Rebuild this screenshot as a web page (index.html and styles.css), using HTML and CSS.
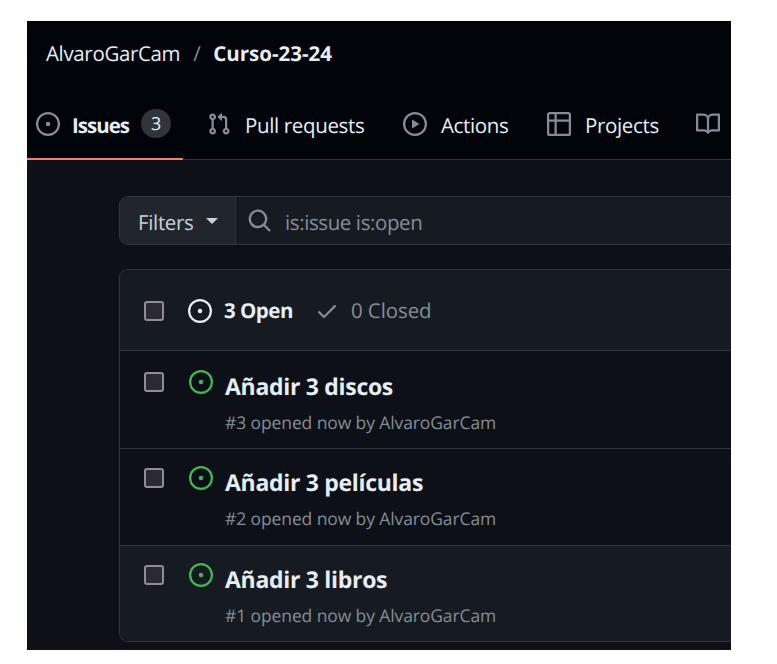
FILE: index.html
```html
<!DOCTYPE html>
<html lang="es">
<head>
<meta charset="utf-8">
<title>Issues · Curso-23-24</title>
<link rel="stylesheet" href="styles.css">
</head>
<body>
<svg class="defs" aria-hidden="true">
  <symbol id="issue" viewBox="0 0 16 16"><path d="M8 9.5a1.5 1.5 0 1 0 0-3 1.5 1.5 0 0 0 0 3Z"/><path d="M8 0a8 8 0 1 1 0 16A8 8 0 0 1 8 0ZM1.5 8a6.5 6.5 0 1 0 13 0 6.5 6.5 0 0 0-13 0Z"/></symbol>
</svg>
<main class="app">
  <header class="header">
    <div class="crumbs"><span class="owner">AlvaroGarCam</span><span class="slash">/</span><strong class="repo">Curso-23-24</strong></div>
    <nav class="tabs">
      <a class="tab active"><svg class="icon"><use href="#issue"/></svg><span class="label">Issues</span><span class="badge">3</span></a>
      <a class="tab"><svg class="icon" viewBox="0 0 16 16"><path d="M1.5 3.25a2.25 2.25 0 1 1 3 2.122v5.256a2.251 2.251 0 1 1-1.5 0V5.372A2.25 2.25 0 0 1 1.5 3.25Zm5.677-.177L9.573.677A.25.25 0 0 1 10 .854V2.5h1A2.5 2.5 0 0 1 13.5 5v5.628a2.251 2.251 0 1 1-1.5 0V5a1 1 0 0 0-1-1h-1v1.646a.25.25 0 0 1-.427.177L7.177 3.427a.25.25 0 0 1 0-.354ZM3.75 2.5a.75.75 0 1 0 0 1.5.75.75 0 0 0 0-1.5Zm0 9.5a.75.75 0 1 0 0 1.5.75.75 0 0 0 0-1.5Zm8.25.75a.75.75 0 1 0 1.5 0 .75.75 0 0 0-1.5 0Z"/></svg><span class="label">Pull requests</span></a>
      <a class="tab"><svg class="icon" viewBox="0 0 16 16"><path d="M8 0a8 8 0 1 1 0 16A8 8 0 0 1 8 0ZM1.5 8a6.5 6.5 0 1 0 13 0 6.5 6.5 0 0 0-13 0Zm4.879-2.773 4.264 2.559a.25.25 0 0 1 0 .428l-4.264 2.559A.25.25 0 0 1 6 10.559V5.442a.25.25 0 0 1 .379-.215Z"/></svg><span class="label">Actions</span></a>
      <a class="tab"><svg class="icon" viewBox="0 0 16 16"><path d="M0 1.75C0 .784.784 0 1.75 0h12.5C15.216 0 16 .784 16 1.75v12.5A1.75 1.75 0 0 1 14.25 16H1.75A1.75 1.75 0 0 1 0 14.25ZM6.5 6.5v8h7.75a.25.25 0 0 0 .25-.25V6.5Zm8-1.5V1.75a.25.25 0 0 0-.25-.25H6.5V5Zm-13 1.5v7.75c0 .138.112.25.25.25H5v-8ZM5 5V1.5H1.75a.25.25 0 0 0-.25.25V5Z"/></svg><span class="label">Projects</span></a>
      <a class="tab"><svg class="icon" viewBox="0 0 16 16"><path d="M0 1.75A.75.75 0 0 1 .75 1h4.253c1.227 0 2.317.59 3 1.501A3.743 3.743 0 0 1 11.006 1h4.245a.75.75 0 0 1 .75.75v10.5a.75.75 0 0 1-.75.75h-4.507a2.25 2.25 0 0 0-1.591.659l-.622.621a.75.75 0 0 1-1.06 0l-.622-.621A2.25 2.25 0 0 0 5.258 13H.75a.75.75 0 0 1-.75-.75Zm7.251 10.324.004-5.073-.002-2.253A2.25 2.25 0 0 0 5.003 2.5H1.5v9h3.757a3.75 3.75 0 0 1 1.994.574ZM8.755 4.75l-.004 7.322a3.752 3.752 0 0 1 1.992-.572H14.5v-9h-3.495a2.25 2.25 0 0 0-2.25 2.25Z"/></svg></a>
    </nav>
  </header>
  <div class="content">
    <div class="search">
      <div class="filters"><span>Filters</span><i class="caret"></i></div>
      <div class="query"><svg class="search-icon" viewBox="0 0 16 16"><path d="M10.68 11.74a6 6 0 0 1-7.922-8.982 6 6 0 0 1 8.982 7.922l3.04 3.04a.749.749 0 1 1-1.06 1.06ZM11.5 7a4.499 4.499 0 1 0-8.997 0A4.499 4.499 0 0 0 11.5 7Z"/></svg><span>is:issue is:open</span></div>
    </div>
    <section class="list">
      <div class="list-head"><span class="check"></span><svg class="icon"><use href="#issue"/></svg><strong class="open">3 Open</strong><svg class="done" viewBox="0 0 16 16"><path d="M13.78 4.22a.75.75 0 0 1 0 1.06l-7.25 7.25a.75.75 0 0 1-1.06 0L2.22 9.28a.751.751 0 0 1 1.06-1.06L6 10.94l6.72-6.72a.75.75 0 0 1 1.06 0Z"/></svg><span class="closed">0 Closed</span></div>
      <article class="row first"><span class="check"></span><svg class="icon"><use href="#issue"/></svg><div><h2 class="title">Añadir 3 discos</h2><p class="meta">#3 opened now by AlvaroGarCam</p></div></article>
      <article class="row"><span class="check"></span><svg class="icon"><use href="#issue"/></svg><div><h2 class="title">Añadir 3 películas</h2><p class="meta">#2 opened now by AlvaroGarCam</p></div></article>
      <article class="row selected"><span class="check"></span><svg class="icon"><use href="#issue"/></svg><div><h2 class="title">Añadir 3 libros</h2><p class="meta">#1 opened now by AlvaroGarCam</p></div></article>
    </section>
  </div>
</main>
</body>
</html>
```

FILE: styles.css
```css
* { box-sizing: border-box; }
body {
  margin: 0;
  padding: 21px 46px 14px 27px;
  background: #fff;
  font-family: "Open Sans", "Noto Sans", sans-serif;
  font-size: 20.5px;
  letter-spacing: -0.35px;
  text-rendering: geometricPrecision;
  white-space: nowrap;
}
.defs { position: absolute; width: 0; height: 0; }
svg { fill: currentColor; flex: none; display: block; }
.icon { width: 24px; height: 24px; }
.app { width: 704px; height: 629px; overflow: hidden; background: #0d1117; color: #e6edf3; }

.header { height: 139px; background: #010409; border-bottom: 1px solid #30363d; }
.crumbs { display: flex; height: 63px; align-items: center; padding: 3px 0 0 19px; }
.slash { width: 33px; text-align: center; color: #848d97; }
.repo { font-weight: 700; font-size: 20.5px; letter-spacing: 0; }
.tabs { display: grid; grid-template-columns: 156px 196px 144px 149px 59px; height: 76px; }
.tab { display: flex; align-items: center; padding: 7px 0 0 24px; color: #e6edf3; }
.tab .icon { color: #848d97; margin: 0 14px 3px 0; }
.tab.active { padding: 9px 0 0 9px; border-bottom: 2px solid #f78166; }
.tab.active .icon { margin-right: 12px; }
.tab.active .label { width: 69px; font-weight: 700; letter-spacing: -1px; }
.badge { width: 30px; height: 29px; margin-bottom: 4px; border-radius: 15px; background: #30343b; font-size: 18px; line-height: 31px; text-align: center; }

.content { padding: 36px 0 0 92px; }
.search { display: flex; height: 49px; border: 1px solid #30363d; border-right: 0; border-radius: 9px 0 0 9px; overflow: hidden; background: #161b22; }
.filters { display: flex; align-items: center; width: 116px; padding: 0 0 0 18px; background: #21262d; border-right: 1px solid #30363d; color: #c9d1d9; }
.filters span { width: 68px; padding-top: 4px; }
.caret { border: 6px solid transparent; border-top-color: #c9d1d9; border-bottom: 0; }
.query { display: flex; align-items: center; padding-left: 11px; color: #848d97; }
.query span { padding-top: 4px; letter-spacing: -0.4px; }
.search-icon { width: 25px; height: 25px; margin-right: 13px; }

.list { height: 373px; margin-top: 24px; border: 1px solid #30363d; border-right: 0; border-radius: 9px 0 0 9px; overflow: hidden; }
.list-head { display: flex; height: 80px; align-items: center; padding: 2px 0 0 24px; background: #161b22; }
.check { flex: none; width: 20px; height: 20px; border: 2px solid #8f8c9b; border-radius: 3px; background: #2b2a33; }
.list-head .icon { margin: 0 12px 0 24px; }
.open { width: 91px; font-weight: 700; letter-spacing: -0.5px; }
.done { width: 24px; height: 24px; margin-right: 12px; color: #848d97; }
.closed { color: #848d97; letter-spacing: -0.1px; }
.row { display: flex; height: 97px; padding-left: 24px; border-top: 1px solid #30363d; }
.row.first { height: 98px; padding-top: 2px; }
.row .check { margin-top: 19px; }
.row .icon { margin: 17px 12px 0 25px; color: #3fb950; }
.title { margin: 13px 0 0; font-size: 23px; line-height: 40px; font-weight: 700; letter-spacing: -0.3px; }
.meta { margin: 0; font-size: 17.5px; line-height: 35px; color: #848d97; letter-spacing: -0.11px; }
.selected { background: #161b22; }
```
